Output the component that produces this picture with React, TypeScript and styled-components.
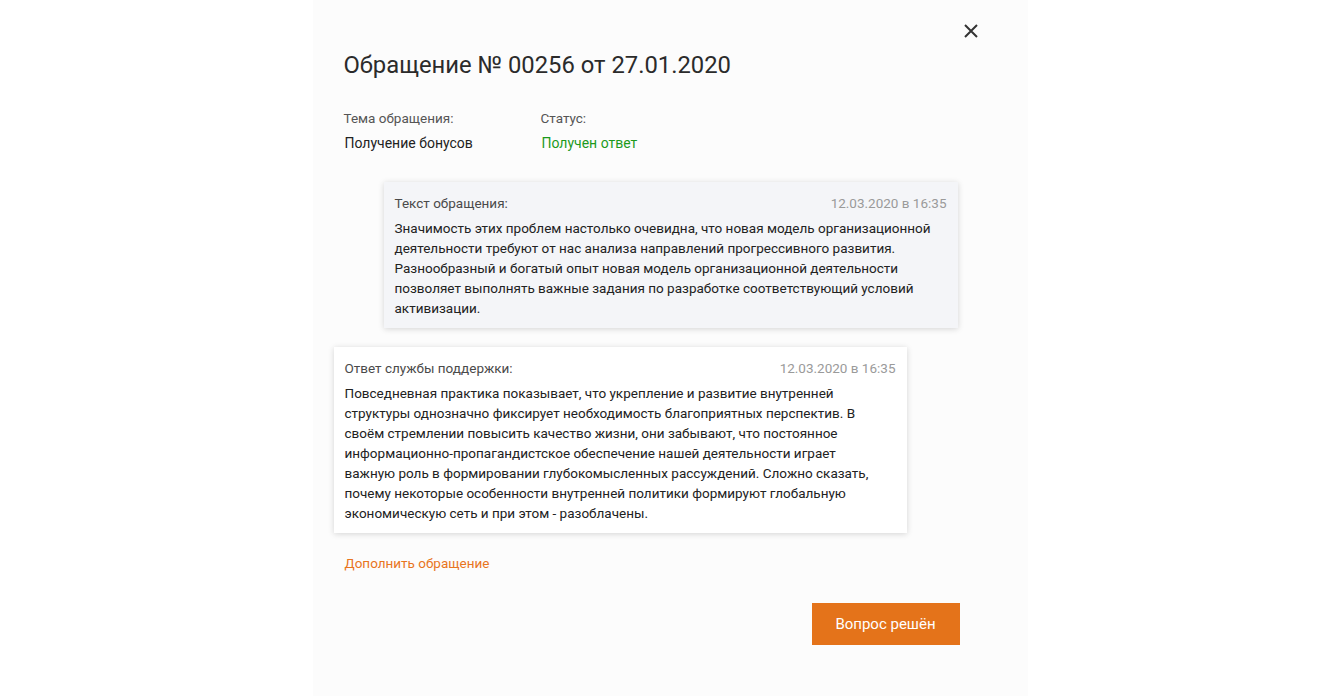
import React from "react";
import styled, { createGlobalStyle } from "styled-components";

const Global = createGlobalStyle`
  html, body { margin: 0; padding: 0; background: #ffffff; }
  body { font-family: Roboto, "Liberation Sans", Arial, sans-serif; color: #222; }
  * { box-sizing: border-box; }
`;

const Page = styled.div`
  width: 1340px;
  height: 696px;
  display: flex;
  justify-content: center;
  overflow: hidden;
`;

const Panel = styled.div`
  position: relative;
  width: 715px;
  height: 696px;
  background: #fcfcfc;
  padding: 50px 68px 0 31px;
  display: flex;
  flex-direction: column;
`;

const Close = styled.button`
  position: absolute;
  top: 22px;
  right: 48px;
  width: 18px;
  height: 18px;
  padding: 0;
  border: 0;
  background: transparent;
  cursor: pointer;
  display: flex;
  align-items: center;
  justify-content: center;
`;

const Title = styled.h1`
  margin: 0;
  font-size: 23.8px;
  font-weight: 400;
  line-height: 30px;
  color: #2b2b2b;
`;

const Meta = styled.div`
  display: grid;
  grid-template-columns: 197px auto;
  grid-template-rows: 20px 20px;
  row-gap: 5px;
  margin-top: 28px;
  line-height: 20px;
`;

const MetaLabel = styled.div`
  font-size: 13.5px;
  color: #555;
`;

const MetaValue = styled.div<{ $green?: boolean }>`
  color: ${(p) => (p.$green ? "#1c9a1c" : "#222")};
  font-size: 14px;
  padding-left: 1px;
`;

const Stack = styled.div`
  display: flex;
  flex-direction: column;
  gap: 19px;
  margin-top: 29px;
`;

const Card = styled.div<{ $offset: number; $width: number; $tint?: boolean }>`
  margin-left: ${(p) => p.$offset}px;
  width: ${(p) => p.$width}px;
  background: ${(p) => (p.$tint ? "#f4f5f8" : "#ffffff")};
  box-shadow: 0 1px 6px rgba(0, 0, 0, 0.16);
  padding: 11px 11px 10px 11px;
`;

const CardHead = styled.div`
  display: flex;
  justify-content: space-between;
  font-size: 13.5px;
  line-height: 20px;
  color: #4a4a4a;
  margin-bottom: 5px;
`;

const CardDate = styled.span`
  color: #9a9a9a;
`;

const CardBody = styled.p`
  margin: 0;
  padding-right: 9px;
  font-size: 13.5px;
  line-height: 20px;
  color: #222;
`;

const Link = styled.a`
  margin-top: 20px;
  margin-left: 1px;
  font-size: 13.5px;
  line-height: 20px;
  color: #e8751f;
  text-decoration: none;
  cursor: pointer;
  align-self: flex-start;
`;

const Footer = styled.div`
  display: flex;
  justify-content: flex-end;
  margin-top: 30px;
`;

const Button = styled.button`
  width: 148px;
  height: 42px;
  border: 0;
  background: #e4731a;
  color: #fff;
  font-family: inherit;
  font-size: 15px;
  cursor: pointer;
`;

export default function App() {
  return (
    <>
      <Global />
      <Page>
        <Panel>
          <Close aria-label="Закрыть">
            <svg width="14" height="14" viewBox="0 0 14 14">
              <path d="M1 1L13 13M13 1L1 13" stroke="#333" strokeWidth="2" />
            </svg>
          </Close>
          <Title>Обращение № 00256 от 27.01.2020</Title>
          <Meta>
            <MetaLabel>Тема обращения:</MetaLabel>
            <MetaLabel>Статус:</MetaLabel>
            <MetaValue>Получение бонусов</MetaValue>
            <MetaValue $green>Получен ответ</MetaValue>
          </Meta>
          <Stack>
            <Card $offset={40} $width={574} $tint>
              <CardHead>
                <span>Текст обращения:</span>
                <CardDate>12.03.2020 в 16:35</CardDate>
              </CardHead>
              <CardBody>
                Значимость этих проблем настолько очевидна, что новая модель организационной
                деятельности требуют от нас анализа направлений прогрессивного развития.
                Разнообразный и богатый опыт новая модель организационной деятельности
                позволяет выполнять важные задания по разработке соответствующий условий
                активизации.
              </CardBody>
            </Card>
            <Card $offset={-10} $width={573}>
              <CardHead>
                <span>Ответ службы поддержки:</span>
                <CardDate>12.03.2020 в 16:35</CardDate>
              </CardHead>
              <CardBody>
                Повседневная практика показывает, что укрепление и развитие внутренней
                структуры однозначно фиксирует необходимость благоприятных перспектив. В
                своём стремлении повысить качество жизни, они забывают, что постоянное
                информационно-пропагандистское обеспечение нашей деятельности играет
                важную роль в формировании глубокомысленных рассуждений. Сложно сказать,
                почему некоторые особенности внутренней политики формируют глобальную
                экономическую сеть и при этом - разоблачены.
              </CardBody>
            </Card>
          </Stack>
          <Link>Дополнить обращение</Link>
          <Footer>
            <Button>Вопрос решён</Button>
          </Footer>
        </Panel>
      </Page>
    </>
  );
}
